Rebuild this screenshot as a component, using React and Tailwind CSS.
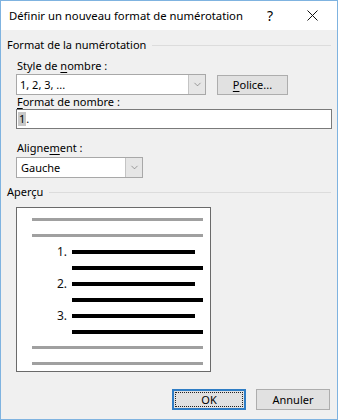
import { ChevronDown } from "lucide-react";

const font = { fontFamily: '"Noto Sans", "Liberation Sans", sans-serif' };

const Key = ({ children }) => <span className="underline underline-offset-2">{children}</span>;

const SectionTitle = ({ children }) => (
  <div className="flex items-center gap-[6px] h-[16px] pr-[6px]">
    <span className="leading-[12px]">{children}</span>
    <div className="flex-1 h-px bg-[#dcdcdc]" />
  </div>
);

const Combo = ({ value, width }) => (
  <div className={`flex h-[21px] border border-[#a8a8a8] bg-white ${width}`}>
    <div className="flex-1 flex items-center pl-[3px] leading-[12px]">{value}</div>
    <div className="w-[17px] flex items-center justify-center bg-[#e6e6e6] border-l border-[#c4c4c4]">
      <ChevronDown size={11} strokeWidth={1.2} className="text-[#5a5a5a]" />
    </div>
  </div>
);

const GrayLine = () => <div className="ml-[15px] w-[171px] h-[3px] bg-[#a0a0a0]" />;

const NumLine = ({ n, long }) => (
  <div className="flex items-center h-[3px] pl-[15px]">
    <span className="w-[40px] pr-[5px] text-right leading-[12px] text-[12px] text-[#111]">{n}</span>
    <div className={`h-[4px] bg-black ${long ? "w-[131px]" : "w-[123px]"}`} />
  </div>
);

export default function App() {
  return (
    <div
      style={font}
      className="w-[338px] h-[420px] border border-[#7fb3e0] bg-[#f0f0f0] flex flex-col text-[11px] text-black"
    >
      {/* title bar */}
      <div className="h-[29px] bg-white flex items-center">
        <span className="pl-[8px] pt-[1px] text-[11.3px] leading-[12px]">Définir un nouveau format de numérotation</span>
        <span className="ml-auto mr-[34px] text-[14px] leading-none">?</span>
        <svg width="11" height="11" viewBox="0 0 11 11" className="mr-[19px]">
          <path d="M0.5 0.5 L10.5 10.5 M10.5 0.5 L0.5 10.5" stroke="#111" strokeWidth="1" />
        </svg>
      </div>

      {/* body */}
      <div className="flex-1 flex flex-col pl-[6px] pt-[7px]">
        <SectionTitle>Format de la numérotation</SectionTitle>

        <div className="pl-[9px] pr-[5px] flex flex-col">
          <div className="h-[21px] pt-[7px] pl-[1px] leading-[12px]">
            Style de <Key>n</Key>ombre :
          </div>
          <div className="flex items-center">
            <Combo value="1, 2, 3, ..." width="w-[190px]" />
            <button className="ml-[11px] w-[71px] h-[20px] border border-[#adadad] bg-[#e1e1e1] leading-[12px]">
              <Key>P</Key>olice...
            </button>
          </div>
          <div className="h-[14px] pt-[1px] pl-[1px] leading-[12px]">
            <Key>F</Key>ormat de nombre :
          </div>
          <div className="h-[20px] border border-[#7a7a7a] bg-white flex items-center pl-[1px] leading-[12px]">
            <span className="bg-[#c8c8c8] px-[1px] leading-[14px]">1</span>
            <span>.</span>
          </div>
          <div className="h-[28px] pt-[13px] pl-[1px] leading-[12px]">
            Aligne<Key>m</Key>ent :
          </div>
          <Combo value={<span className="pl-[1px]">Gauche</span>} width="w-[127px]" />
        </div>

        <div className="mt-[6px]">
          <SectionTitle>Aperçu</SectionTitle>
        </div>

        <div className="ml-[9px] mt-[7px] w-[195px] h-[165px] border border-[#6a6a6a] bg-white flex flex-col pt-[10px] gap-[13px]">
          <GrayLine />
          <GrayLine />
          <NumLine n="1." />
          <NumLine long />
          <NumLine n="2." />
          <NumLine long />
          <NumLine n="3." />
          <NumLine long />
          <GrayLine />
          <GrayLine />
        </div>

        <div className="flex justify-end gap-[10px] mt-[17px] pr-[7px]">
          <button className="w-[74px] h-[21px] border-2 border-[#2f7dc5] bg-[#e1e1e1] p-px leading-[12px]">
            <div className="w-full h-full border border-dotted border-[#222] flex items-center justify-center">OK</div>
          </button>
          <button className="w-[74px] h-[21px] border border-[#adadad] bg-[#e1e1e1] leading-[12px]">Annuler</button>
        </div>
      </div>
    </div>
  );
}
